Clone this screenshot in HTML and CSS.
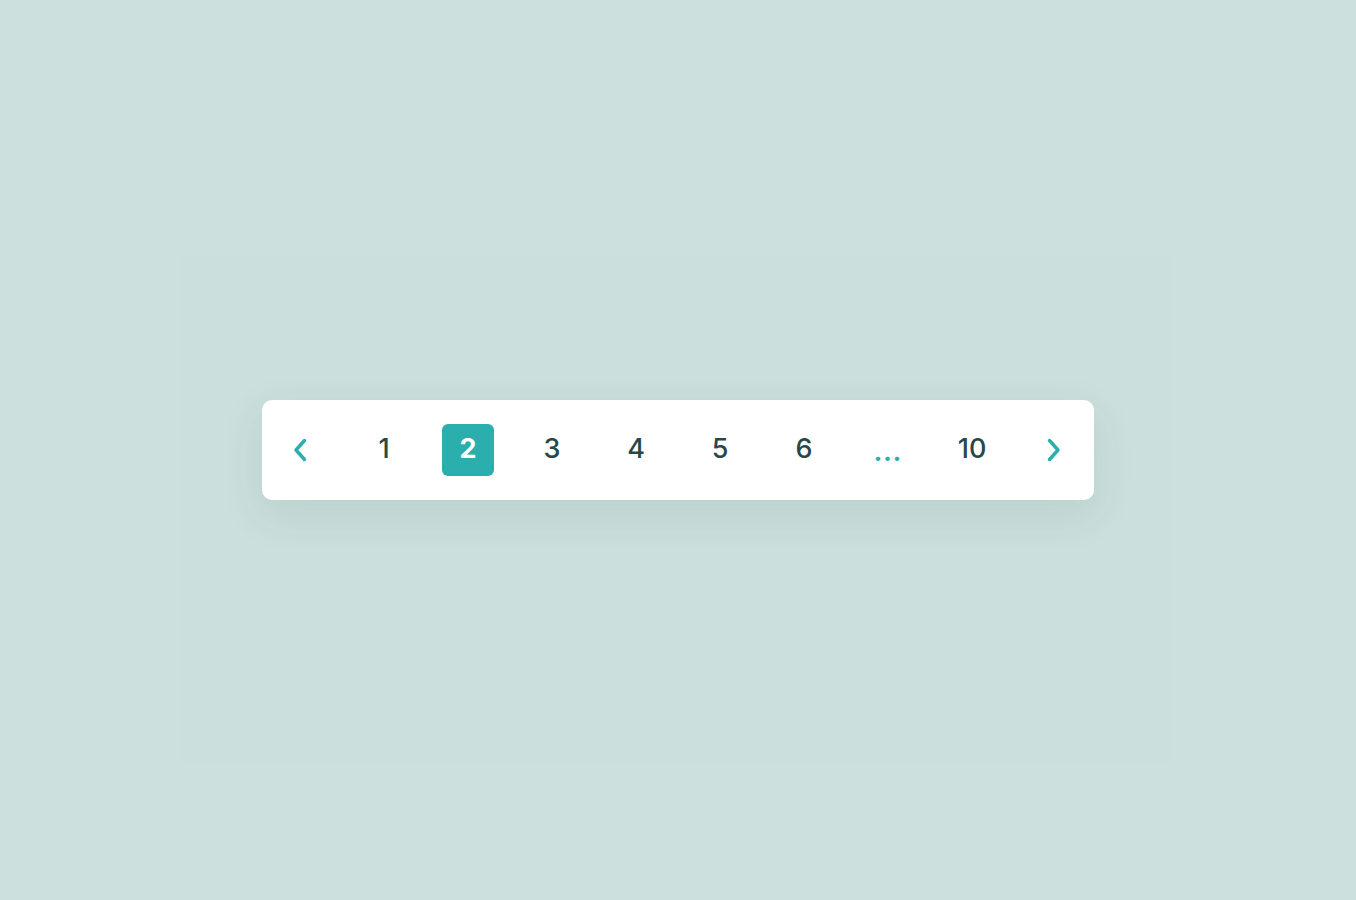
FILE: index.html
```html
<!DOCTYPE html>
<html>
	<head>
		<title>Pagination</title>
		<link rel="stylesheet" href="styles.css">
	</head>
	<body>
		<div class="stage">
			<nav class="pagination">
				<a class="page arrow" href="#">
					<svg width="16" height="24" viewBox="0 0 16 24"><path d="M12.5 2.5 L4 12 L12.5 21.5" fill="none" stroke="currentColor" stroke-width="3.4" stroke-linecap="round" stroke-linejoin="round"/></svg>
				</a>
				<a class="page" href="#">1</a>
				<a class="page active" href="#">2</a>
				<a class="page" href="#">3</a>
				<a class="page" href="#">4</a>
				<a class="page" href="#">5</a>
				<a class="page" href="#">6</a>
				<span class="page dots">...</span>
				<a class="page" href="#">10</a>
				<a class="page arrow next" href="#">
					<svg width="16" height="24" viewBox="0 0 16 24"><path d="M3.5 2.5 L12 12 L3.5 21.5" fill="none" stroke="currentColor" stroke-width="3.4" stroke-linecap="round" stroke-linejoin="round"/></svg>
				</a>
			</nav>
		</div>
	</body>
</html>
```
FILE: styles.css
```css
body {
	margin: 0;
	background-color: #cce0dd;
	font-family: "Inter", "Open Sans", sans-serif;
}
.stage {
	box-sizing: border-box;
	width: 989px;
	height: 507px;
	margin: 255px 0 0 181px;
	padding: 145px 0 0 81px;
	background-color: #cbdfdc;
}
.pagination {
	display: flex;
	gap: 32px;
	width: 832px;
	box-sizing: border-box;
	padding: 24px 12px;
	background-color: #fff;
	border-radius: 10px;
	box-shadow: 0 14px 40px rgba(60, 110, 105, 0.12);
}
.page {
	display: flex;
	align-items: center;
	justify-content: center;
	box-sizing: border-box;
	width: 52px;
	height: 52px;
	padding-bottom: 3px;
	border-radius: 6px;
	color: #274848;
	font-size: 27px;
	font-weight: 500;
	text-decoration: none;
}
.active {
	background-color: #2aaeae;
	color: #fff;
	font-weight: 700;
}
.arrow {
	padding: 0;
	color: #2aaeae;
}
.next {
	padding-right: 4px;
}
.dots {
	color: #2aaeae;
	font-weight: 800;
	font-size: 24px;
	padding: 4px 0 0;
	letter-spacing: 1px;
}
```
